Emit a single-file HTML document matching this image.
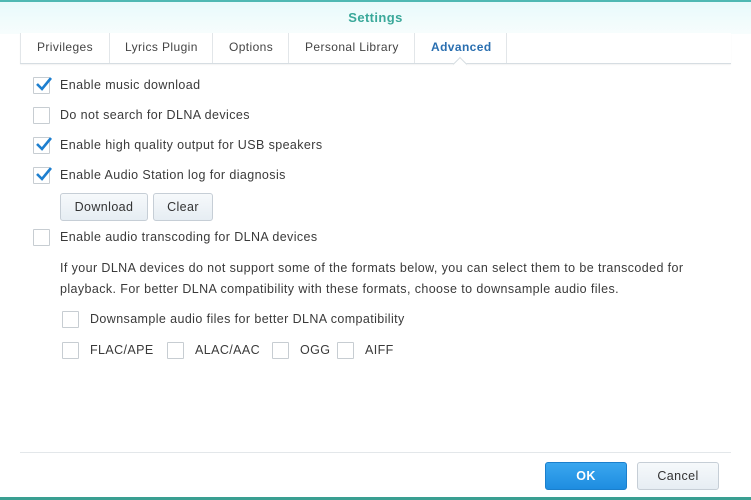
<!DOCTYPE html>
<html><head><style>
*{margin:0;padding:0;box-sizing:border-box}
body{width:751px;height:500px;overflow:hidden;background:#fff;font-family:"Liberation Sans",sans-serif;font-size:12.5px;letter-spacing:0.4px;color:#3a3a3a;position:relative}
.top{position:absolute;left:0;top:0;width:751px;height:34px;background:linear-gradient(#e8fafb,#f7fdfd);border-top:2px solid #4fb8b3}
.title{position:absolute;top:8px;left:0;width:751px;text-align:center;color:#3aa89a;font-weight:bold;font-size:13px}
.tabs{position:absolute;top:33px;left:20px;width:711px;height:31px;background:#fff;border-bottom:1px solid #d6dde2;box-shadow:0 1px 1px rgba(0,0,0,.05)}
.tab{position:absolute;top:5px;height:20px;line-height:13px;padding-top:3px;font-size:12px;color:#444}
.sep{position:absolute;top:0;width:1px;height:30px;background:#e2e6e9}
.arrow{position:absolute;left:455px;top:59px;width:10px;height:10px;background:#fff;border-left:1px solid #d6dde2;border-top:1px solid #d6dde2;transform:rotate(45deg)}
.cb{position:absolute;width:17px;height:17px;border:1px solid #c7cdd2;background:#fff;border-radius:1px}
.lbl{position:absolute}
.btn{position:absolute;height:28px;border:1px solid #c6ced6;border-radius:3px;background:linear-gradient(#f6f9fb,#e6edf3);text-align:center;line-height:26px;color:#333}
.ck{position:absolute;left:1px;top:-2px}
</style></head><body>
<div class="top"><div class="title">Settings</div></div>
<div class="tabs">
<div class="sep" style="left:0"></div>
<div class="tab" style="left:17px">Privileges</div>
<div class="sep" style="left:89px"></div>
<div class="tab" style="left:105px">Lyrics Plugin</div>
<div class="sep" style="left:192px"></div>
<div class="tab" style="left:209px">Options</div>
<div class="sep" style="left:268px"></div>
<div class="tab" style="left:285px">Personal Library</div>
<div class="sep" style="left:394px"></div>
<div class="tab" style="left:411px;color:#2a6fb0;font-weight:bold">Advanced</div>
<div class="sep" style="left:486px"></div>
</div>
<div class="arrow"></div>

<div class="cb" style="left:33px;top:77px"><svg class="ck" width="18" height="16" viewBox="0 0 18 16"><path d="M2 8 L7 13 L16 2" fill="none" stroke="#1e7fcf" stroke-width="2.6"/></svg></div>
<div class="lbl" style="left:60px;top:78px">Enable music download</div>
<div class="cb" style="left:33px;top:107px"></div>
<div class="lbl" style="left:60px;top:108px">Do not search for DLNA devices</div>
<div class="cb" style="left:33px;top:137px"><svg class="ck" width="18" height="16" viewBox="0 0 18 16"><path d="M2 8 L7 13 L16 2" fill="none" stroke="#1e7fcf" stroke-width="2.6"/></svg></div>
<div class="lbl" style="left:60px;top:138px">Enable high quality output for USB speakers</div>
<div class="cb" style="left:33px;top:167px"><svg class="ck" width="18" height="16" viewBox="0 0 18 16"><path d="M2 8 L7 13 L16 2" fill="none" stroke="#1e7fcf" stroke-width="2.6"/></svg></div>
<div class="lbl" style="left:60px;top:168px">Enable Audio Station log for diagnosis</div>
<div class="btn" style="left:60px;top:193px;width:88px">Download</div>
<div class="btn" style="left:153px;top:193px;width:60px">Clear</div>
<div class="cb" style="left:33px;top:229px"></div>
<div class="lbl" style="left:60px;top:230px">Enable audio transcoding for DLNA devices</div>
<div class="lbl" style="left:60px;top:258px;width:665px;line-height:21px">If your DLNA devices do not support some of the formats below, you can select them to be transcoded for playback. For better DLNA compatibility with these formats, choose to downsample audio files.</div>
<div class="cb" style="left:62px;top:311px"></div>
<div class="lbl" style="left:90px;top:312px">Downsample audio files for better DLNA compatibility</div>
<div class="cb" style="left:62px;top:342px"></div>
<div class="lbl" style="left:90px;top:343px">FLAC/APE</div>
<div class="cb" style="left:167px;top:342px"></div>
<div class="lbl" style="left:195px;top:343px">ALAC/AAC</div>
<div class="cb" style="left:272px;top:342px"></div>
<div class="lbl" style="left:300px;top:343px">OGG</div>
<div class="cb" style="left:337px;top:342px"></div>
<div class="lbl" style="left:365px;top:343px">AIFF</div>

<div style="position:absolute;left:20px;top:452px;width:711px;height:1px;background:#e3e7ea"></div>
<div class="btn" style="left:545px;top:462px;width:82px;background:linear-gradient(#3aa7ef,#1e8de0);border-color:#1b7fcc;color:#fff;font-weight:bold">OK</div>
<div class="btn" style="left:637px;top:462px;width:82px">Cancel</div>
<div style="position:absolute;left:0;top:497px;width:751px;height:3px;background:#3a9f92"></div>
</body></html>
